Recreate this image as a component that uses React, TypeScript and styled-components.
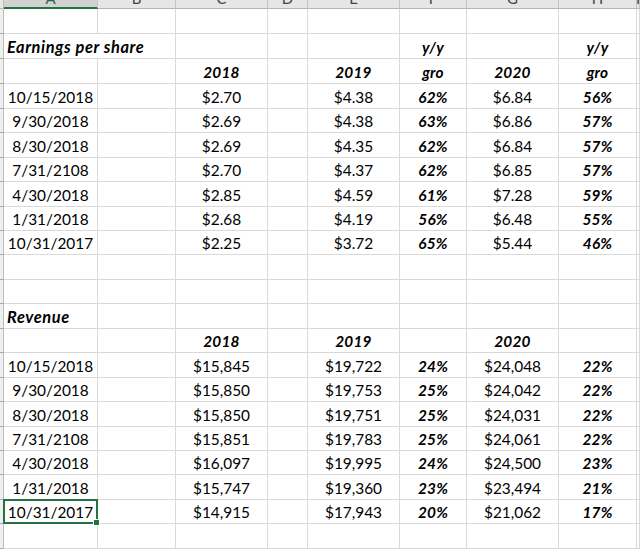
import React from 'react';
import styled, { createGlobalStyle, css } from 'styled-components';

const GlobalStyle = createGlobalStyle`
  html, body { margin: 0; padding: 0; background: #fff; overflow: hidden; }
  body { font-family: Lato, "Liberation Sans", sans-serif; }
`;

const ROW_HEIGHTS = [25, 25, 25, 25, 24, 25, 24, 25, 24, 24, 25, 24, 25, 24, 25, 24, 25, 24, 24, 25, 24, 25];
const LETTERS = ['A', 'B', 'C', 'D', 'E', 'F', 'G', 'H', 'I'];

const Sheet = styled.div<{ $rows: string }>`
  display: grid;
  grid-template-columns: 4px 94px 78px 92px 40px 92px 67px 92px 78px 1fr;
  grid-template-rows: ${(p) => p.$rows};
  width: 640px;
  height: 549px;
  overflow: hidden;
  background: #fff;
`;

const Corner = styled.div`
  box-sizing: border-box;
  background: #e6e6e6;
  border-right: 1px solid #bdbdbd;
  border-bottom: 1px solid #b5b5b5;
`;

const ColHeader = styled.div<{ $selected?: boolean }>`
  box-sizing: border-box;
  display: flex;
  align-items: flex-end;
  justify-content: center;
  overflow: hidden;
  background: ${(p) => (p.$selected ? '#d2d2d2' : '#e6e6e6')};
  border-right: 1px solid #c4c4c4;
  border-bottom: ${(p) => (p.$selected ? '2px solid #217346' : '1px solid #b5b5b5')};
  color: ${(p) => (p.$selected ? '#1e6b41' : '#444')};
  font-family: Lato, "Liberation Sans", sans-serif;
  font-size: 15px;
  line-height: 15px;
`;

const HeaderLetter = styled.span<{ $selected?: boolean }>`
  margin-bottom: ${(p) => (p.$selected ? '1px' : '2px')};
`;

const RowHeader = styled.div`
  box-sizing: border-box;
  background: #efefef;
  border-right: 1px solid #bdbdbd;
  border-bottom: 1px solid #a8a8a8;
`;

const Cell = styled.div<{ $align?: 'left' | 'center'; $emph?: boolean; $label?: boolean; $span?: number }>`
  box-sizing: border-box;
  position: relative;
  display: flex;
  align-items: flex-end;
  justify-content: ${(p) => (p.$align === 'left' ? 'flex-start' : 'center')};
  padding: 0 0 2px ${(p) => (p.$align === 'left' ? '3px' : '0')};
  border-right: 1px solid #d9d9d9;
  border-bottom: 1px solid #d9d9d9;
  font-family: Lato, "Liberation Sans", sans-serif;
  font-size: ${(p) => (p.$label ? '16.4px' : '15.4px')};
  letter-spacing: ${(p) => (p.$label ? '0.6px' : (p.$emph ? '0.2px' : '0'))};
  line-height: 18px;
  font-weight: ${(p) => (p.$emph ? 700 : 400)};
  font-style: ${(p) => (p.$emph ? 'italic' : 'normal')};
  color: #000;
  white-space: nowrap;
  ${(p) =>
    p.$span &&
    css`
      grid-column: span ${p.$span};
    `}
`;

const CellText = styled.span`
  position: relative;
  z-index: 2;
`;

const Selection = styled.div`
  position: absolute;
  inset: -1px;
  border: 2px solid #217346;
  z-index: 3;
  pointer-events: none;
`;

const FillHandle = styled.div`
  position: absolute;
  right: -4px;
  bottom: -4px;
  width: 5px;
  height: 5px;
  background: #217346;
  border: 1px solid #fff;
  z-index: 4;
`;

type CellData = { t?: string; emph?: boolean; label?: boolean; align?: 'left' | 'center'; span?: number; selected?: boolean };

const E: CellData = {};
const empty = (): CellData[] => Array.from({ length: 9 }, () => ({}));

const plain = (t: string): CellData => ({ t });
const emph = (t: string): CellData => ({ t, emph: true });

const dataRow = (vals: string[], selected = false): CellData[] => [
  { t: vals[0], selected },
  E,
  plain(vals[1]),
  E,
  plain(vals[2]),
  emph(vals[3]),
  plain(vals[4]),
  emph(vals[5]),
  E,
];

const eps = [
  ['10/15/2018', '$2.70', '$4.38', '62%', '$6.84', '56%'],
  ['9/30/2018', '$2.69', '$4.38', '63%', '$6.86', '57%'],
  ['8/30/2018', '$2.69', '$4.35', '62%', '$6.84', '57%'],
  ['7/31/2108', '$2.70', '$4.37', '62%', '$6.85', '57%'],
  ['4/30/2018', '$2.85', '$4.59', '61%', '$7.28', '59%'],
  ['1/31/2018', '$2.68', '$4.19', '56%', '$6.48', '55%'],
  ['10/31/2017', '$2.25', '$3.72', '65%', '$5.44', '46%'],
];

const revenue = [
  ['10/15/2018', '$15,845', '$19,722', '24%', '$24,048', '22%'],
  ['9/30/2018', '$15,850', '$19,753', '25%', '$24,042', '22%'],
  ['8/30/2018', '$15,850', '$19,751', '25%', '$24,031', '22%'],
  ['7/31/2108', '$15,851', '$19,783', '25%', '$24,061', '22%'],
  ['4/30/2018', '$16,097', '$19,995', '24%', '$24,500', '23%'],
  ['1/31/2018', '$15,747', '$19,360', '23%', '$23,494', '21%'],
  ['10/31/2017', '$14,915', '$17,943', '20%', '$21,062', '17%'],
];

const rows: CellData[][] = [
  empty(),
  [{ t: 'Earnings per share', emph: true, label: true, align: 'left', span: 2 }, E, E, E, emph('y/y'), E, emph('y/y'), E],
  [E, E, emph('2018'), E, emph('2019'), emph('gro'), emph('2020'), emph('gro'), E],
  ...eps.map((r) => dataRow(r)),
  empty(),
  empty(),
  [{ t: 'Revenue', emph: true, label: true, align: 'left' }, E, E, E, E, E, E, E, E],
  [E, E, emph('2018'), E, emph('2019'), E, emph('2020'), E, E],
  ...revenue.map((r, i) => dataRow(r, i === revenue.length - 1)),
  empty(),
];

export default function App() {
  const rowTemplate = ['9px', ...ROW_HEIGHTS.map((h) => `${h}px`)].join(' ');
  return (
    <>
      <GlobalStyle />
      <Sheet $rows={rowTemplate}>
        <Corner />
        {LETTERS.map((l, i) => (
          <ColHeader key={l} $selected={i === 0}>
            <HeaderLetter $selected={i === 0}>{l}</HeaderLetter>
          </ColHeader>
        ))}
        {rows.map((row, ri) => (
          <React.Fragment key={ri}>
            <RowHeader />
            {row.map((c, ci) => (
              <Cell key={ci} $align={c.align} $emph={c.emph} $label={c.label} $span={c.span}>
                {c.t && <CellText>{c.t}</CellText>}
                {c.selected && (
                  <Selection>
                    <FillHandle />
                  </Selection>
                )}
              </Cell>
            ))}
          </React.Fragment>
        ))}
      </Sheet>
    </>
  );
}
